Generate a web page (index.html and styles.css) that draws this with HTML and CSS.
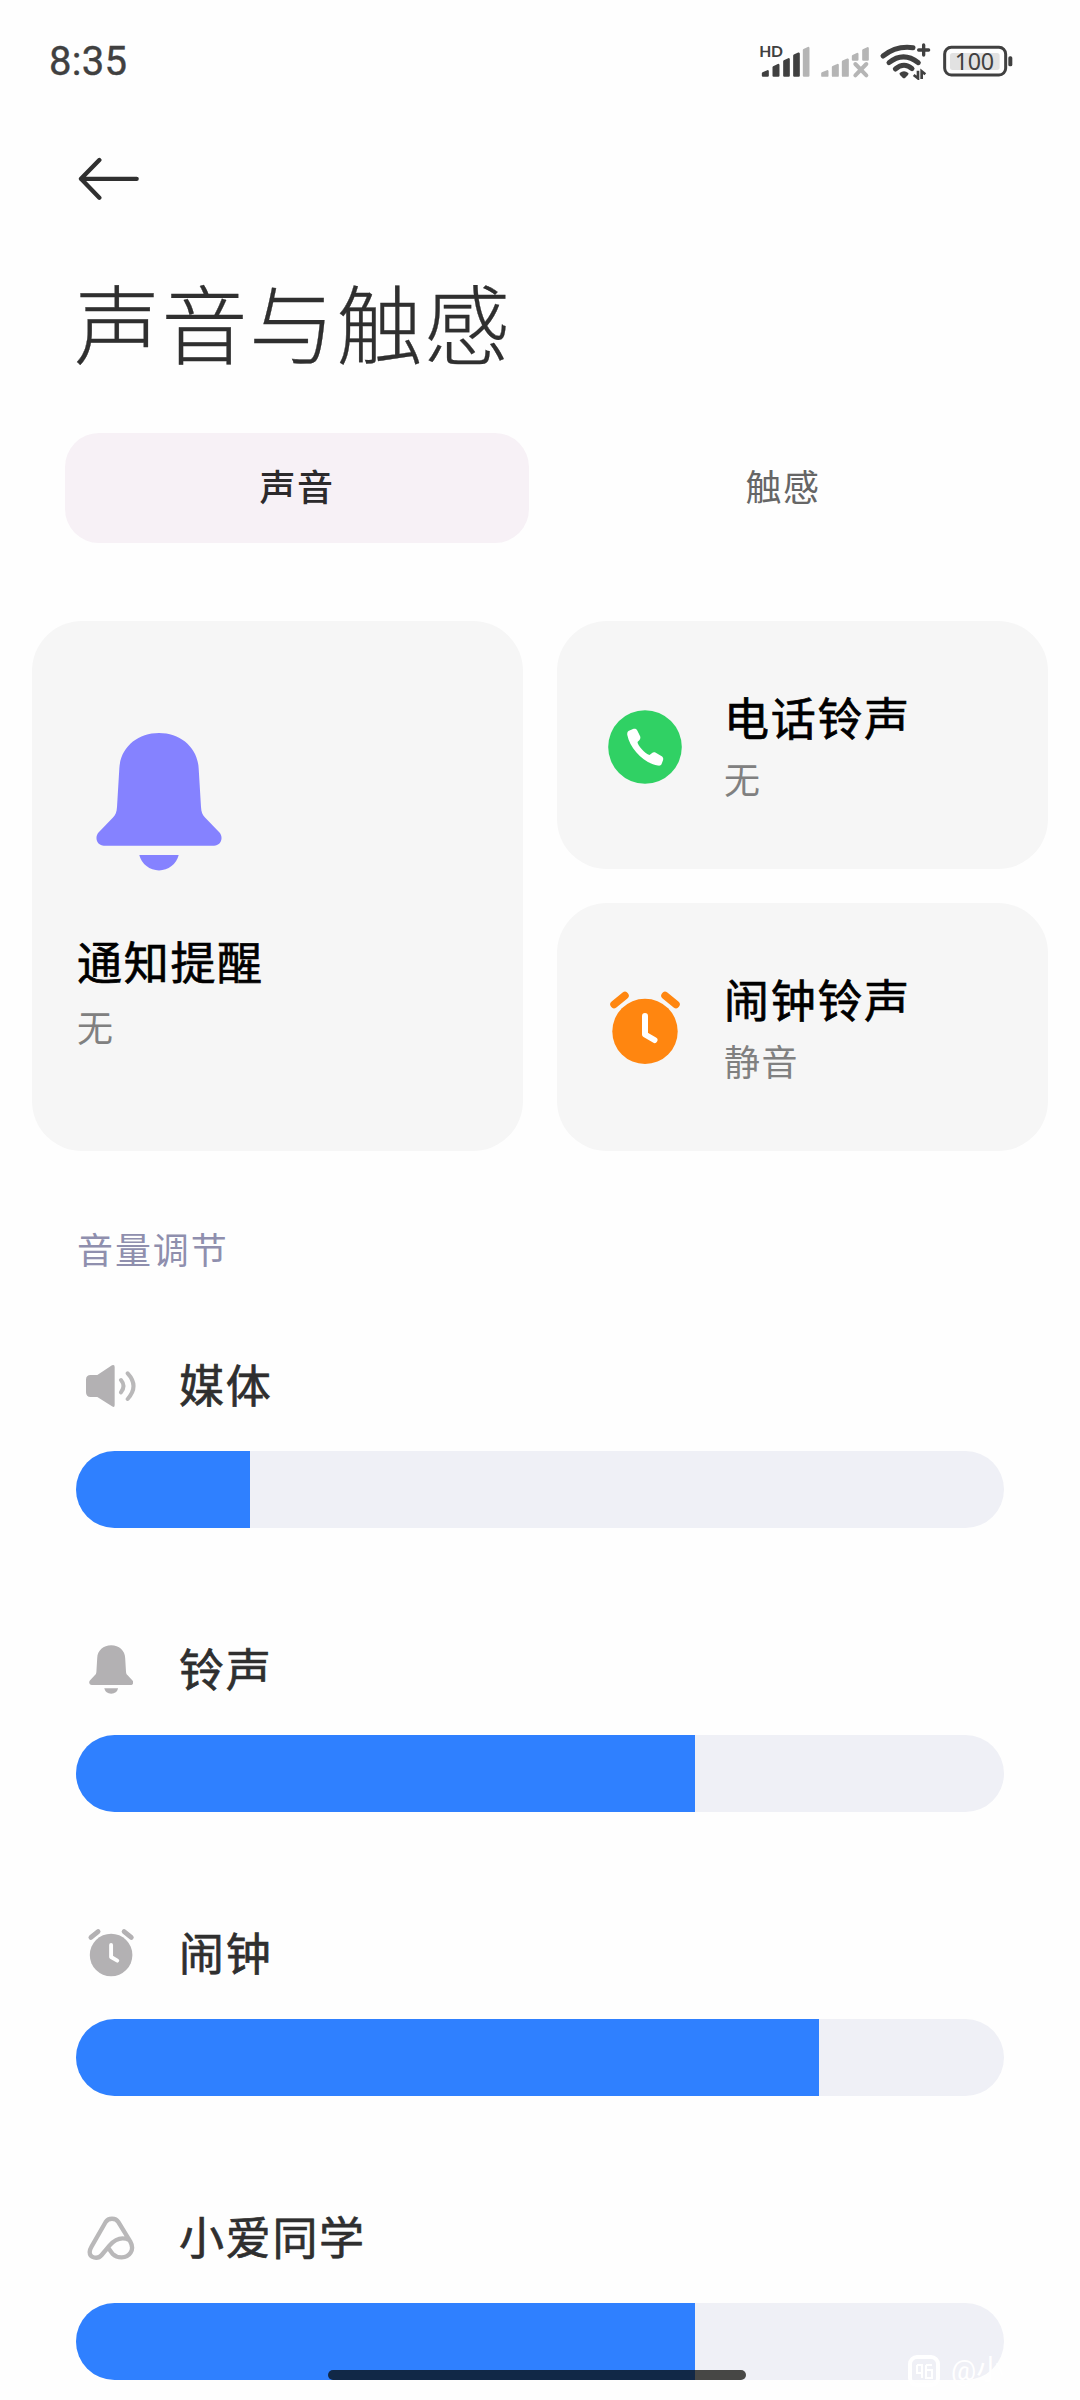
FILE: index.html
```html
<!DOCTYPE html>
<html lang="zh-CN">
<head>
<meta charset="utf-8">
<title>声音与触感</title>
<link rel="stylesheet" href="styles.css">
</head>
<body>
<svg class="defs" aria-hidden="true">
  <symbol id="bell" viewBox="0 0 126 140">
    <path d="M63 1C85 1 102 16 102.700 37L105 75C105.300 80 106.500 83 109 85.500L123.500 100.500C128 106 124.500 113.700 118 113.700H8C1.500 113.700-2 106 2.500 100.500L17 85.500C19.500 83 20.700 80 21 75L23.300 37C24 16 41 1 63 1Z"/>
    <path d="M43.300 123H82.700A20.300 20.300 0 0 1 43.300 123Z"/>
  </symbol>
  <symbol id="alarm" viewBox="0 0 74 75">
    <circle cx="37" cy="41.400" r="32.700"/>
    <path class="ears" d="M6 14.500L17 5.500M68 14.500L57 5.500"/>
    <path class="hands" d="M37 26V44.500L46.500 50"/>
  </symbol>
</svg>
<div class="screen">
  <header class="status">
    <span class="time">8:35</span>
    <div class="status-icons">
      <svg width="51.67" height="38.33" viewBox="55 35 155 115">
        <text class="hd" x="56" y="80" textLength="71">HD</text>
        <g class="bars">
          <path d="M67 136V129L81 123V136ZM99 136V111L113 104V136ZM131 136V93L144 87V136ZM161 136V76L174 70V136Z"/>
          <path class="dim" d="M190 136V59L203 53V136Z"/>
        </g>
      </svg>
      <svg width="50" height="38.33" viewBox="240 35 150 115">
        <g class="bars">
          <path class="dim" d="M247 136V129L262 123V136ZM279 136V110L293 104V136ZM309 136V94L323 88V136ZM339 88V77L352 71V88ZM370 88V60L383 54V88Z"/>
        </g>
        <path class="cross" d="M346 101L379 135M379 101L346 135"/>
      </svg>
      <svg width="52.67" height="38.33" viewBox="420 35 158 115">
        <path class="wifi" d="M432 77Q472 45 522 52M450 97Q493 62 538 97M469 116Q495 94 519 115"/>
        <path class="solid" d="M482 128Q495 117 508 128Q510 131 506 135L499 142Q495 145 491 142L484 135Q480 131 482 128Z"/>
        <path class="plus" d="M554 44V74M539 59H569"/>
        <path class="arrows" d="M537 121V144L524 134M548 146V123L559 132"/>
      </svg>
      <svg width="71.67" height="38.33" viewBox="605 35 215 115">
        <rect class="charge" x="629" y="68" width="149" height="51" rx="8"/>
        <rect class="case" x="613" y="51" width="183" height="83" rx="20"/>
        <rect class="solid" x="804" y="78" width="12" height="30" rx="5"/>
        <text class="percent" x="702" y="120" text-anchor="middle">100</text>
      </svg>
    </div>
  </header>

  <nav class="back">
    <svg width="62" height="44" viewBox="147 383 186 132"><path d="M156 448.500H323M211 392L156 448.500L211 505"/></svg>
  </nav>

  <h1 class="title">声音与触感</h1>

  <div class="tabs">
    <div class="tab active">声音</div>
    <div class="tab">触感</div>
  </div>

  <section class="cards">
    <article class="card tall">
      <svg class="bell-large" width="126" height="140"><use href="#bell"/></svg>
      <h2>通知提醒</h2>
      <p>无</p>
    </article>
    <article class="card wide">
      <svg width="74" height="74" viewBox="0 0 74 74">
        <circle class="phone-bg" cx="37" cy="37" r="36.800"/>
        <path class="phone" d="M21.500 20.400L25 19C27 18.400 28.600 19 29.400 20.700L32 26C32.700 27.600 32.400 29 31.300 30.200L29.500 32C29.300 35 37 44 41.500 45L43.800 43.200C45 42.200 46.400 42.100 47.800 42.800L53.300 46C55 47 55.600 48.300 55 50.200L53.600 54C53 55.600 51.600 55.900 49.800 55.600C36 53 22 39 19.300 25C19 22.600 19.600 21.200 21.500 20.400Z"/>
      </svg>
      <div><h2>电话铃声</h2><p>无</p></div>
    </article>
    <article class="card wide">
      <svg class="alarm-large" width="74" height="75"><use href="#alarm"/></svg>
      <div><h2>闹钟铃声</h2><p>静音</p></div>
    </article>
  </section>

  <h3 class="section-label">音量调节</h3>

  <section class="volumes">
    <div class="volume">
      <div class="volume-head">
        <span class="volume-icon"><svg width="52" height="44" viewBox="77 459 156 132">
          <path class="speaker" d="M94 492H114L158 463Q166 459 166 468V582Q166 591 158 586L114 558H94Q80 558 80 544V506Q80 492 94 492Z"/>
          <path class="waves" d="M185 507Q200 525 185 544M205 487Q240 525 205 564"/>
        </svg></span>
        <span class="volume-name">媒体</span>
      </div>
      <div class="track"><div class="fill" style="width:18.75%"></div></div>
    </div>
    <div class="volume">
      <div class="volume-head">
        <span class="volume-icon"><svg width="44.400" height="49.300"><use href="#bell"/></svg></span>
        <span class="volume-name">铃声</span>
      </div>
      <div class="track"><div class="fill" style="width:66.7%"></div></div>
    </div>
    <div class="volume">
      <div class="volume-head">
        <span class="volume-icon alarm-small"><svg width="48.200" height="48.900"><use href="#alarm"/></svg></span>
        <span class="volume-name">闹钟</span>
      </div>
      <div class="track"><div class="fill" style="width:80.1%"></div></div>
    </div>
    <div class="volume">
      <div class="volume-head">
        <span class="volume-icon"><svg width="50" height="46" viewBox="79 73 150 138">
          <path class="assistant" d="M126 193C114 207 90 202 90 184C90 177 93 172 96 167L138 94C146 81 168 81 176 94L212 153C226 178 209 200 186 200C172 200 165 196 159 190L146 172M126 193L150 164C165 147 184 136 209 148"/>
        </svg></span>
        <span class="volume-name">小爱同学</span>
      </div>
      <div class="track"><div class="fill" style="width:66.7%"></div></div>
    </div>
  </section>

  <div class="watermark">
    <svg width="32" height="32" viewBox="0 0 32 32">
      <rect x="2" y="2" width="28" height="28" rx="7"/>
      <path d="M9 10h5v13M9 10v8h5M18 10h6M18 10v13h6v-8h-6"/>
    </svg>
    <span>@小</span>
  </div>
  <div class="home-bar"></div>
</div>
</body>
</html>
```
FILE: styles.css
```css
* { box-sizing: border-box; }
body {
  margin: 0;
  background: #fefefe;
  font-family: Roboto, "Noto Sans CJK SC", sans-serif;
  color: #2f2f2f;
}
h1, h2, h3, p { margin: 0; font-weight: 400; }
svg { display: block; flex: none; }
.defs { position: absolute; width: 0; height: 0; }
.screen {
  position: relative;
  width: 1080px;
  height: 2400px;
  overflow: hidden;
}

/* status bar */
.status {
  display: flex;
  justify-content: space-between;
  align-items: center;
  height: 122px;
  padding: 0 66.700px 0 49px;
}
.time {
  padding-top: 2px;
  font-size: 40px;
  line-height: 48px;
  letter-spacing: .3px;
  color: #404040;
  -webkit-text-stroke: .4px;
}
.status-icons { display: flex; gap: 9.600px; }
.hd { font: 700 47px Lato, sans-serif; fill: #404040; }
.percent { font: 400 70px "Noto Sans", sans-serif; letter-spacing: -1px; fill: #404040; }
.bars path { fill: #404040; stroke: #404040; stroke-width: 7; stroke-linejoin: round; }
.bars .dim { fill: #b5b5b5; stroke: #b5b5b5; }
.cross { stroke: #b5b5b5; stroke-width: 12; stroke-linecap: round; }
.wifi { fill: none; stroke: #404040; stroke-width: 15; stroke-linecap: round; }
.solid { fill: #404040; }
.plus { stroke: #404040; stroke-width: 10; stroke-linecap: round; }
.arrows { fill: none; stroke: #404040; stroke-width: 8; }
.charge { fill: #e2e2e2; }
.case { fill: none; stroke: #404040; stroke-width: 9; }

.back { padding: 35px 0 0 78px; height: 113px; }
.back path {
  fill: none;
  stroke: #303030;
  stroke-width: 13;
  stroke-linecap: round;
  stroke-linejoin: round;
}

.title {
  height: 198px;
  padding: 26px 0 0 74px;
  font: 300 86px/120px "Noto Sans CJK SC", sans-serif;
  letter-spacing: 1.500px;
  -webkit-text-stroke: .3px;
}

.tabs {
  display: grid;
  grid-template-columns: 464px 464px;
  gap: 22px;
  height: 110px;
  padding-left: 65px;
}
.tab {
  padding-top: 3px;
  border-radius: 34px;
  font-size: 36px;
  line-height: 106px;
  letter-spacing: 1.500px;
  text-align: center;
  color: #666;
}
.tab.active { background: #f7f1f6; color: #2c2a2c; font-weight: 500; }

/* ringtone cards */
.cards {
  display: grid;
  grid-template-columns: 491px 491px;
  grid-template-rows: 248px 248px;
  gap: 34px;
  padding: 78px 32px 0;
}
.card { border-radius: 50px; background: #f6f6f6; }
.card h2 {
  font-size: 45px;
  line-height: 60px;
  letter-spacing: 1.700px;
  color: #000;
  -webkit-text-stroke: .7px;
}
.card p { font-size: 36px; line-height: 48px; letter-spacing: 1.500px; color: #808080; }
.tall { grid-row: span 2; padding: 111px 0 0 45px; }
.tall h2 { margin-top: 63px; }
.tall p { margin-top: 11px; }
.bell-large { margin-left: 19px; fill: #8582ff; }
.wide { display: flex; align-items: center; gap: 42px; padding: 4px 0 0 51px; }
.wide p { margin-top: 7px; }
.wide div { margin-top: 3px; }
.phone-bg { fill: #30d164; }
.phone { fill: #fff; }
.ears, .hands { fill: none; stroke-linecap: round; stroke-linejoin: round; }
.ears { stroke: currentColor; stroke-width: 7.500; }
.hands { stroke: #fff; stroke-width: 6; }
.alarm-large { margin-bottom: 3px; fill: #ff8610; color: #ff8610; }

.section-label {
  height: 203px;
  padding: 77px 0 0 77px;
  font-size: 36px;
  line-height: 48px;
  letter-spacing: 1.900px;
  color: #8f8fae;
}

/* volume sliders */
.volumes { display: grid; gap: 110px; padding: 0 76px; }
.volume { display: grid; gap: 33px; }
.volume-head {
  display: flex;
  align-items: center;
  gap: 33px;
  height: 64px;
  font-size: 45px;
  line-height: 60px;
  letter-spacing: 1.700px;
  -webkit-text-stroke: .7px;
}
.volume-name { padding-top: 4px; }
.volume-icon { display: flex; justify-content: center; width: 70px; fill: #b3b1b3; color: #b3b1b3; }
.alarm-small { padding-bottom: 3px; }
.waves, .assistant { fill: none; stroke: #b9b8b9; stroke-width: 12; stroke-linecap: round; }
.assistant { stroke-width: 13; stroke-linejoin: round; }
.track { height: 77px; border-radius: 39px; overflow: hidden; background: #eff0f6; }
.fill { height: 100%; background: #2f80ff; }

/* overlays */
.watermark {
  position: absolute;
  left: 908px;
  top: 2355px;
  display: flex;
  align-items: center;
  gap: 11px;
  font-size: 28px;
  line-height: 32px;
  color: #fff;
}
.watermark rect { fill: none; stroke: #fff; stroke-width: 4; }
.watermark path { fill: none; stroke: #fff; stroke-width: 2; }
.home-bar {
  position: absolute;
  left: 328px;
  top: 2370px;
  width: 418px;
  height: 10px;
  border-radius: 5px;
  background: rgba(5, 5, 0, .72);
}
```
